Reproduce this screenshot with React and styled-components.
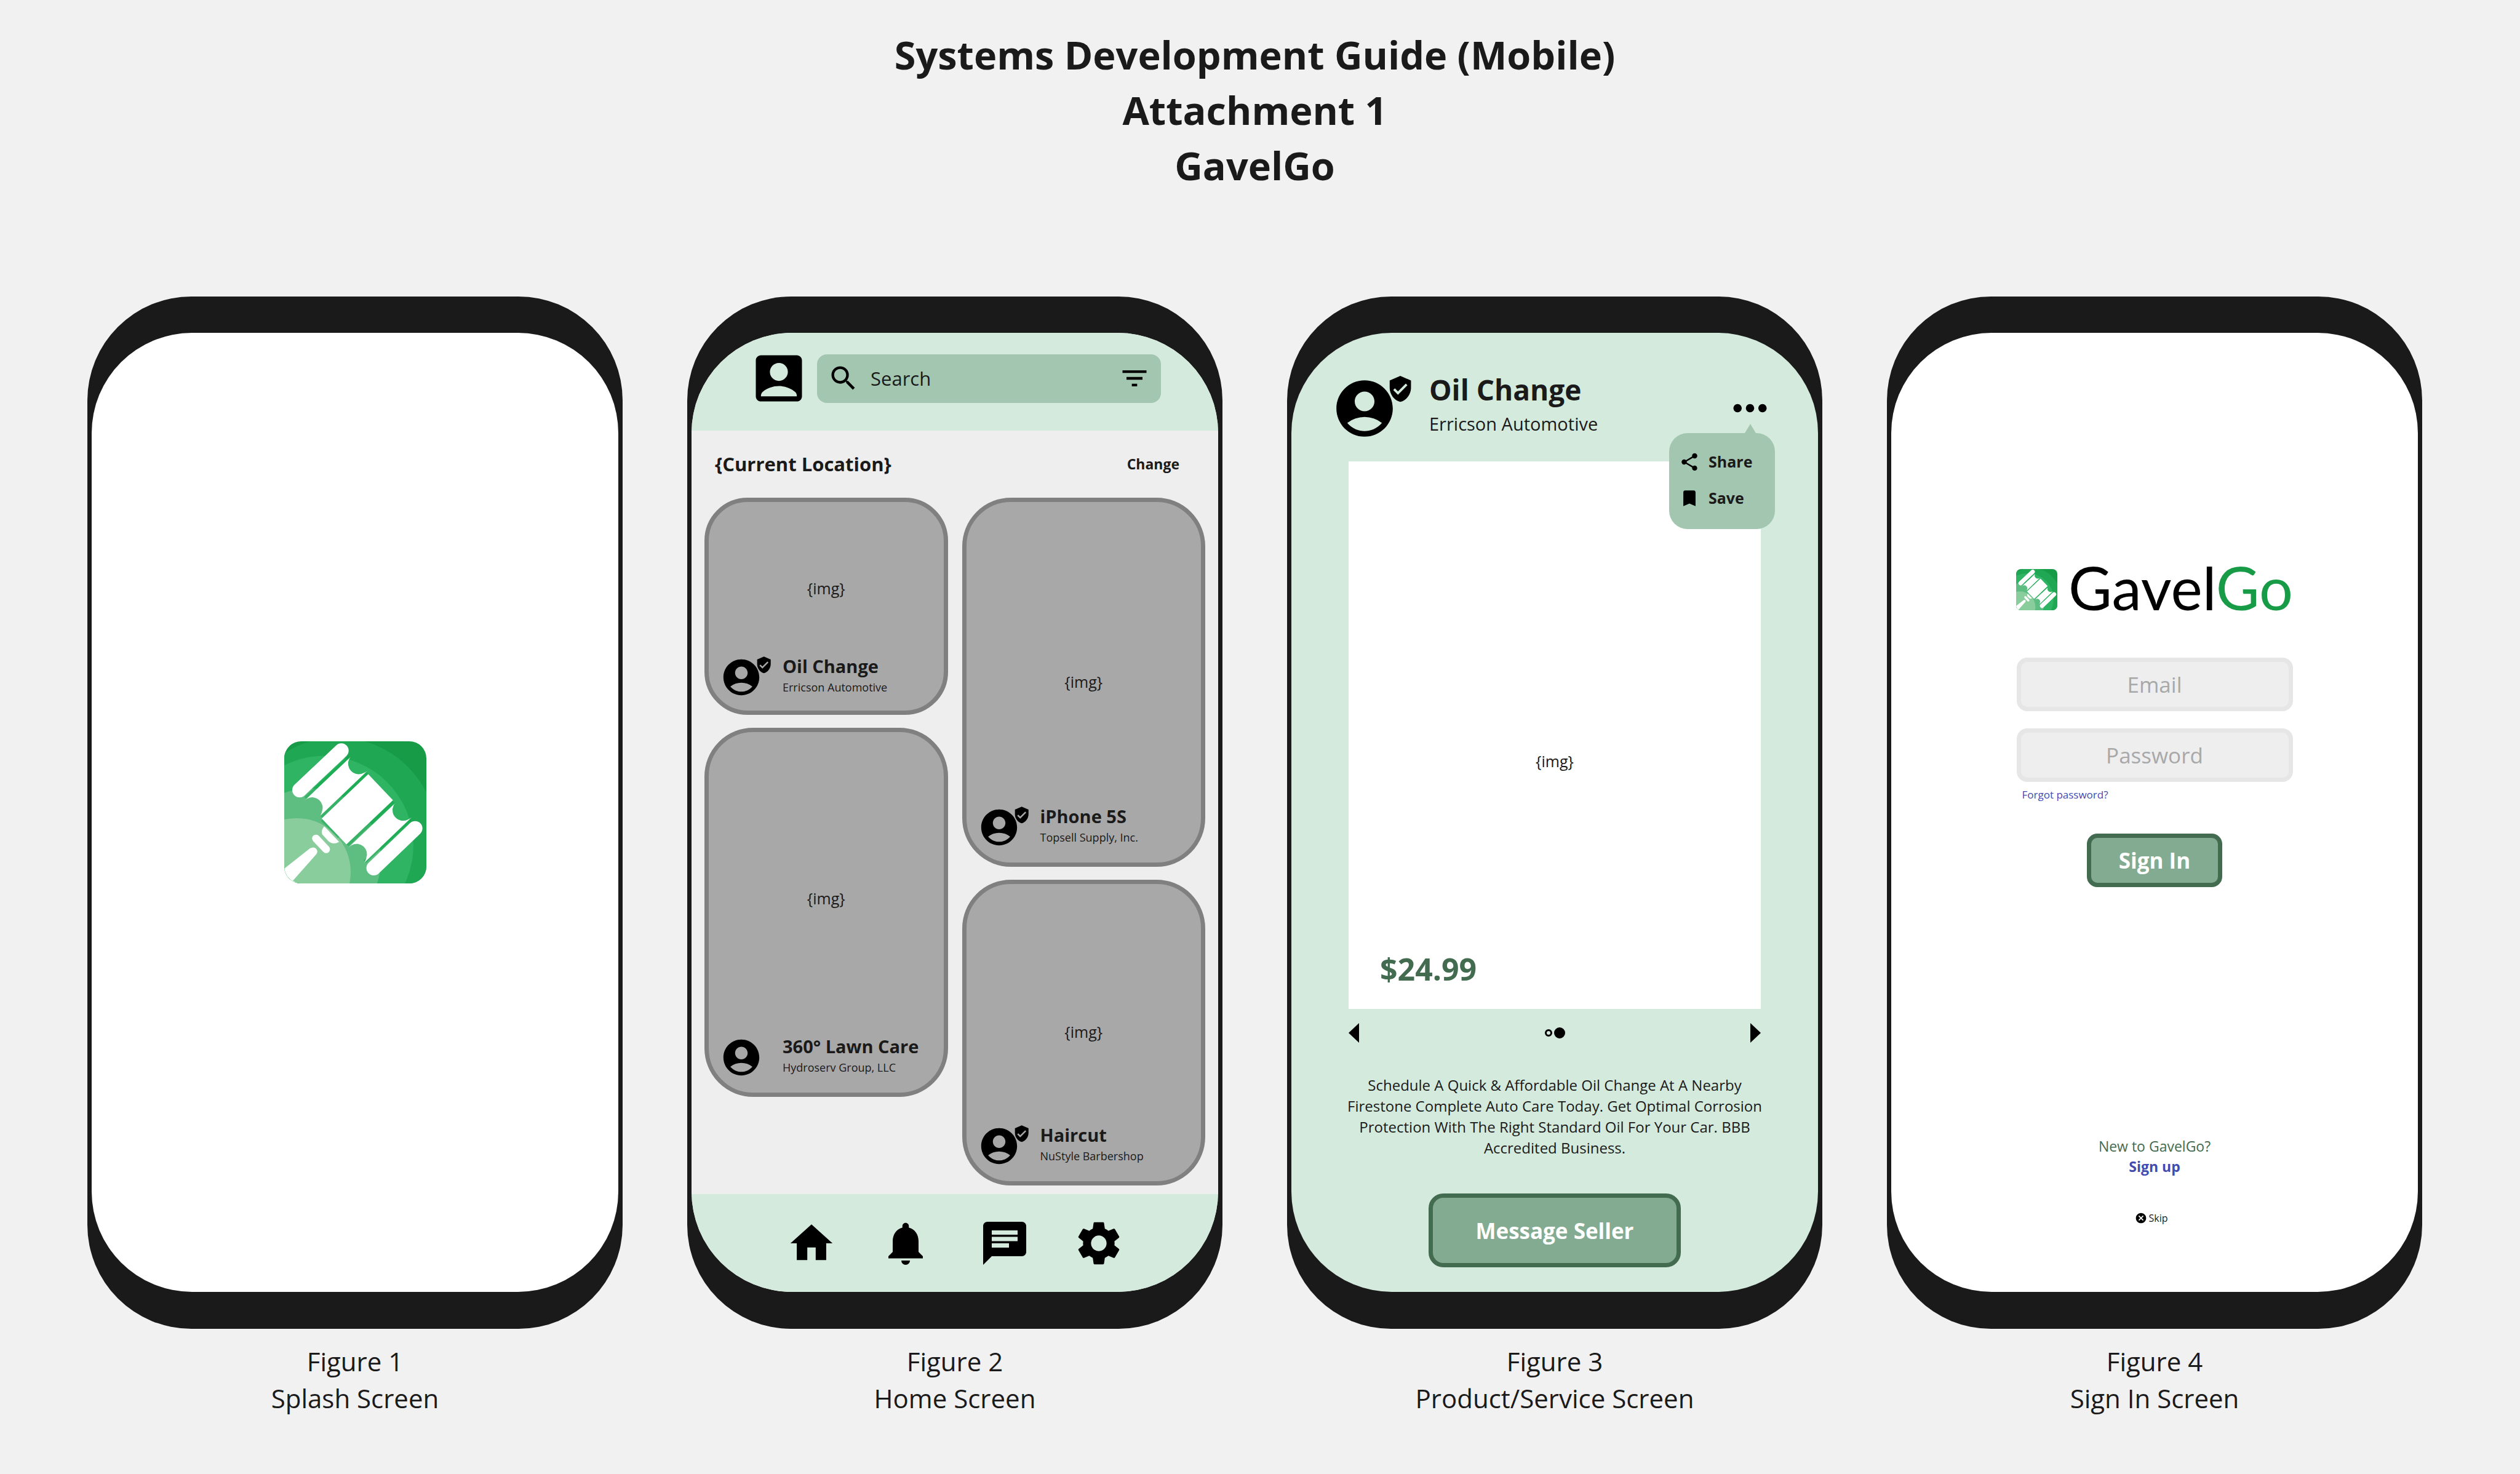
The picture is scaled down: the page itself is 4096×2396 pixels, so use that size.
import React from "react";
import styled, { createGlobalStyle } from "styled-components";
import {
  MdAccountBox,
  MdAccountCircle,
  MdBookmark,
  MdCancel,
  MdChat,
  MdFilterList,
  MdHome,
  MdMoreHoriz,
  MdNotifications,
  MdSearch,
  MdShare,
  MdVerifiedUser,
} from "react-icons/md";

const color = {
  ink: "#1a1a1a",
  page: "#f1f1f1",
  panel: "#eeeeee",
  mint: "#d4eadd",
  sage: "#a3c6b1",
  leaf: "#83ab92",
  forest: "#436b50",
  link: "#414bb2",
  brand: "#179b47",
  muted: "#a8a8a8",
};

const GlobalStyle = createGlobalStyle`
  *, *::before, *::after { box-sizing: border-box; }
  body {
    margin: 0;
    background: ${color.page};
    color: ${color.ink};
    font-family: "Open Sans", "Noto Sans", sans-serif;
  }
  h1, h2, p, figure { margin: 0; }
  button, input { font: inherit; color: inherit; }
  button { padding: 0; border: 0; background: none; cursor: pointer; }
  a { text-decoration: none; }
  svg { display: block; flex: none; }
`;

/* ---------- page ---------- */

const Page = styled.main`
  min-height: 100vh;
  padding: 44px 159px 44px 142px;
`;

const PageTitle = styled.h1`
  font-size: 63px;
  line-height: 90px;
  font-weight: 700;
  text-align: center;
`;

const TitleLine = styled.span`
  display: block;
`;

const Gallery = styled.div`
  display: grid;
  grid-template-columns: repeat(4, minmax(0, 1fr));
  gap: 105px;
  margin-top: 168px;
`;

const Figure = styled.figure`
  display: flex;
  flex-direction: column;
  gap: 23px;
`;

const Caption = styled.figcaption`
  font-size: 42px;
  line-height: 60px;
  text-align: center;
`;

const Device = styled.div`
  padding: 59px 7px 60px;
  border-radius: 169px;
  background: ${color.ink};
`;

const Screen = styled.div`
  display: flex;
  flex-direction: column;
  aspect-ratio: 856 / 1559;
  border-radius: 163px;
  overflow: hidden;
  background: ${(p) => p.$fill || "#ffffff"};
`;

function Phone({ number, name, fill, children }) {
  return (
    <Figure>
      <Device>
        <Screen $fill={fill}>{children}</Screen>
      </Device>
      <Caption>
        Figure {number}
        <br />
        {name}
      </Caption>
    </Figure>
  );
}

/* ---------- shared drawings ---------- */

function GavelLogo({ size, id }) {
  const segment =
    "M553 234Q546 241 543 249A62 62 0 0 0 628 330Q638 327 648 319L372 583Q380 572 383 557A61 61 0 0 0 298 480Q288 485 279 494Z";
  return (
    <svg width={size} height={size} viewBox="162 144 834 834" role="img" aria-label="GavelGo logo">
      <clipPath id={id}>
        <rect x="162" y="144" width="834" height="834" rx="100" />
      </clipPath>
      <g clipPath={`url(#${id})`}>
        <rect x="162" y="144" width="834" height="834" fill="#179b47" />
        <circle cx="475" cy="705" r="583" fill="#20a754" />
        <circle cx="395" cy="755" r="525" fill="#2eb463" />
        <circle cx="310" cy="840" r="420" fill="#5ebe82" />
        <circle cx="235" cy="912" r="317" fill="#8acd9d" />
        <g stroke="#0aa545" strokeWidth="20" opacity="0.45">
          <path d="M287 478L545 236M378 586L648 328M532 753L803 499M635 850L903 604M385 604L484 706" fill="none" />
        </g>
        <g fill="#ffffff">
          <path d="M655 337L800 490L527 749L382 597Z" />
          <path d={segment} />
          <path d={segment} transform="translate(260 273)" />
          <path d="M397 643Q376 666 385 690L421 730Q448 754 484 734Z" />
          <path d="M162 891L313 772Q334 760 349 774Q362 790 351 806L213 962L240 978H162Z" />
        </g>
        <g stroke="#ffffff" strokeLinecap="round">
          <path d="M252 430L497 199M687 888L930 655" strokeWidth="86" />
          <path d="M348 714L408 778" strokeWidth="45" />
        </g>
      </g>
    </svg>
  );
}

function GearIcon({ size }) {
  return (
    <svg width={size} height={size} viewBox="0 0 24 24" fill="currentColor" aria-hidden="true">
      <path d="M19.43 12.98c.04-.32.07-.64.07-.98s-.03-.66-.07-.98l2.11-1.65c.19-.15.24-.42.12-.64l-2-3.46c-.12-.22-.39-.3-.61-.22l-2.49 1c-.52-.4-1.08-.73-1.69-.98l-.38-2.65C14.46 2.18 14.25 2 14 2h-4c-.25 0-.46.18-.49.42l-.38 2.65c-.61.25-1.17.59-1.69.98l-2.49-1c-.23-.09-.49 0-.61.22l-2 3.46c-.13.22-.07.49.12.64l2.11 1.65c-.04.32-.07.65-.07.98s.03.66.07.98l-2.11 1.65c-.19.15-.24.42-.12.64l2 3.46c.12.22.39.3.61.22l2.49-1c.52.4 1.08.73 1.69.98l.38 2.65c.03.24.24.42.49.42h4c.25 0 .46-.18.49-.42l.38-2.65c.61-.25 1.17-.59 1.69-.98l2.49 1c.23.09.49 0 .61-.22l2-3.46c.12-.22.07-.49-.12-.64l-2.11-1.65zM12 15.7c-2.04 0-3.7-1.66-3.7-3.7s1.66-3.7 3.7-3.7 3.7 1.66 3.7 3.7-1.66 3.7-3.7 3.7z" />
    </svg>
  );
}

const AvatarBox = styled.span`
  position: relative;
  flex: none;
  width: ${(p) => p.$size}px;
  height: ${(p) => p.$size}px;
  color: #000000;
`;

const VerifiedBadge = styled(MdVerifiedUser)`
  position: absolute;
  top: 0;
  left: 82%;
  width: 42%;
  height: 42%;
`;

function Avatar({ size, verified }) {
  return (
    <AvatarBox $size={size}>
      <MdAccountCircle size={size} />
      {verified && <VerifiedBadge />}
    </AvatarBox>
  );
}

/* ---------- splash ---------- */

const SplashBody = styled.div`
  flex: 1;
  display: grid;
  place-items: center;
`;

/* ---------- home ---------- */

const HomeHeader = styled.header`
  display: flex;
  align-items: center;
  gap: 12px;
  padding: 24px 93px 35px 92px;
  background: ${color.mint};
`;

const IconButton = styled.button`
  display: grid;
  place-items: center;
  color: #000000;
`;

const SearchBar = styled.form`
  flex: 1;
  min-width: 0;
  display: flex;
  align-items: center;
  gap: 18px;
  height: 79px;
  padding: 0 17px;
  border-radius: 16px;
  background: ${color.sage};
`;

const SearchIcon = styled(MdSearch)`
  color: #000000;
`;

const SearchInput = styled.input`
  flex: 1;
  min-width: 0;
  padding: 0;
  border: 0;
  outline: 0;
  background: transparent;
  font-size: 31px;
  line-height: 44px;
  &::placeholder { color: ${color.ink}; opacity: 1; }
`;

const HomeBody = styled.div`
  flex: 1;
  padding: 0 21px;
  background: ${color.panel};
`;

const LocationRow = styled.div`
  display: flex;
  align-items: center;
  justify-content: space-between;
  padding: 33px 42px 34px 17px;
  line-height: 42px;
  font-weight: 700;
`;

const Location = styled.h2`
  font-size: 31px;
`;

const ChangeButton = styled.button`
  font-size: 23px;
  font-weight: 700;
`;

const Columns = styled.div`
  display: grid;
  grid-template-columns: repeat(2, minmax(0, 1fr));
  align-items: start;
  gap: 23px;
`;

const Column = styled.div`
  display: grid;
  gap: 21px;
`;

const Card = styled.article`
  display: grid;
  height: ${(p) => p.$height}px;
  padding: 0 18px ${(p) => (p.$compact ? 19 : 22)}px;
  border: 7px solid #808080;
  border-radius: ${(p) => (p.$compact ? 70 : 79)}px;
  background: ${color.muted};
`;

const ImageSlot = styled.span`
  grid-area: 1 / 1;
  place-self: center;
  padding-top: ${(p) => p.$drop || 0}px;
  padding-bottom: ${(p) => p.$lift || 0}px;
  font-size: 25px;
  line-height: 35px;
`;

const CardFooter = styled.div`
  grid-area: 1 / 1;
  align-self: end;
  display: flex;
  align-items: center;
  gap: 32px;
`;

const CardTitle = styled.h2`
  font-size: 29px;
  line-height: 33px;
  font-weight: 700;
`;

const CardSeller = styled.p`
  font-size: 18px;
  line-height: 37px;
`;

function ListingCard({ title, seller, height, compact, lift, drop, verified }) {
  return (
    <Card $height={height} $compact={compact}>
      <ImageSlot $lift={lift} $drop={drop}>
        {"{img}"}
      </ImageSlot>
      <CardFooter>
        <Avatar size={70} verified={verified} />
        <div>
          <CardTitle>{title}</CardTitle>
          <CardSeller>{seller}</CardSeller>
        </div>
      </CardFooter>
    </Card>
  );
}

const TabBar = styled.nav`
  display: flex;
  align-items: center;
  justify-content: center;
  gap: 77px;
  height: 159px;
  background: ${color.mint};
`;

const TabPair = styled.div`
  display: grid;
  grid-template-columns: 84px 84px;
  gap: 69px;
`;

/* ---------- product ---------- */

const ProductHeader = styled.header`
  display: flex;
  align-items: center;
  gap: 50px;
  padding: 67px 70px 31px 64px;
`;

const ProductHeading = styled.div`
  flex: 1;
`;

const ProductTitle = styled.h2`
  font-size: 46px;
  line-height: 50px;
  font-weight: 700;
`;

const ProductSeller = styled.p`
  font-size: 29px;
  line-height: 61px;
`;

const MenuAnchor = styled.div`
  position: relative;
`;

const Menu = styled.div`
  position: absolute;
  top: 100%;
  right: 0;
  width: 172px;
  padding: 17px 16px 21px;
  border-radius: 30px;
  background: ${color.sage};
  &::before {
    content: "";
    position: absolute;
    bottom: 100%;
    right: 31px;
    border: 9px solid transparent;
    border-top: 0;
    border-bottom: 15px solid ${color.sage};
  }
`;

const MenuItem = styled.button`
  display: flex;
  align-items: center;
  gap: 14px;
  width: 100%;
  height: 59px;
  font-size: 25px;
  line-height: 35px;
  font-weight: 700;
  svg { color: #000000; }
`;

const ProductImage = styled.div`
  display: grid;
  height: 890px;
  margin: 0 93px;
  background: #ffffff;
`;

const Price = styled.p`
  grid-area: 1 / 1;
  place-self: end start;
  padding: 0 51px 30px;
  font-size: 50px;
  line-height: 70px;
  font-weight: 700;
  color: ${color.forest};
`;

const Pager = styled.div`
  display: flex;
  align-items: center;
  justify-content: space-between;
  margin: 23px 93px 52px;
`;

const PageDots = styled.div`
  display: flex;
  align-items: center;
  gap: 3px;
`;

const PageDot = styled.span`
  width: ${(p) => (p.$active ? 18 : 12)}px;
  aspect-ratio: 1;
  border: 3px solid #000000;
  border-radius: 50%;
  background: ${(p) => (p.$active ? "#000000" : "transparent")};
`;

const Description = styled.p`
  padding: 0 83px;
  font-size: 24px;
  line-height: 34px;
  text-align: center;
`;

const ActionButton = styled.button`
  align-self: center;
  width: ${(p) => (p.$large ? 410 : 220)}px;
  height: ${(p) => (p.$large ? 120 : 87)}px;
  margin-top: ${(p) => (p.$large ? 57 : 51)}px;
  border: 7px solid ${color.forest};
  border-radius: ${(p) => (p.$large ? 24 : 17)}px;
  background: ${color.leaf};
  color: #ffffff;
  font-size: 35px;
  font-weight: 700;
`;

/* ---------- sign in ---------- */

const SignInBody = styled.div`
  flex: 1;
  display: flex;
  flex-direction: column;
  align-items: center;
  padding: 380px 0 108px;
`;

const Brand = styled.div`
  display: flex;
  align-items: baseline;
  gap: 18px;
`;

const Wordmark = styled.span`
  font-family: Lato, "Open Sans", sans-serif;
  font-size: 97px;
  line-height: 67px;
  color: #000000;
`;

const WordmarkAccent = styled.span`
  color: ${color.brand};
`;

const SignInForm = styled.form`
  display: flex;
  flex-direction: column;
  width: 449px;
  margin-top: 77px;
`;

const Fields = styled.div`
  display: grid;
  gap: 28px;
`;

const TextField = styled.input`
  width: 100%;
  height: 87px;
  padding: 0 20px;
  border: 7px solid #e6e6e6;
  border-radius: 17px;
  outline: 0;
  background: ${color.panel};
  font-size: 35px;
  text-align: center;
  &::placeholder { color: ${color.muted}; opacity: 1; }
`;

const ForgotLink = styled.a`
  align-self: flex-start;
  margin: 9px 9px 0;
  font-size: 17px;
  line-height: 24px;
  color: ${color.link};
`;

const SignUpPrompt = styled.p`
  margin-top: auto;
  font-size: 23px;
  line-height: 33px;
  text-align: center;
  color: ${color.forest};
`;

const SignUpLink = styled.a`
  display: block;
  font-weight: 700;
  color: ${color.link};
`;

const SkipButton = styled.button`
  display: flex;
  align-items: center;
  gap: 2px;
  margin-top: 55px;
  padding-right: 10px;
  font-size: 16px;
  line-height: 24px;
  svg { color: #000000; }
`;

/* ---------- screens ---------- */

function HomeScreen() {
  return (
    <>
      <HomeHeader>
        <IconButton type="button" aria-label="Account">
          <MdAccountBox size={100} />
        </IconButton>
        <SearchBar role="search">
          <SearchIcon size={52} />
          <SearchInput type="text" aria-label="Search" placeholder="Search" />
          <IconButton type="button" aria-label="Filter">
            <MdFilterList size={52} />
          </IconButton>
        </SearchBar>
      </HomeHeader>
      <HomeBody>
        <LocationRow>
          <Location>{"{Current Location}"}</Location>
          <ChangeButton type="button">Change</ChangeButton>
        </LocationRow>
        <Columns>
          <Column>
            <ListingCard title="Oil Change" seller="Erricson Automotive" height={353} lift={40} compact verified />
            <ListingCard title="360° Lawn Care" seller="Hydroserv Group, LLC" height={600} lift={24} />
          </Column>
          <Column>
            <ListingCard title="iPhone 5S" seller="Topsell Supply, Inc." height={600} drop={20} verified />
            <ListingCard title="Haircut" seller="NuStyle Barbershop" height={497} drop={20} verified />
          </Column>
        </Columns>
      </HomeBody>
      <TabBar>
        <TabPair>
          <IconButton type="button" aria-label="Home">
            <MdHome size={82} />
          </IconButton>
          <IconButton type="button" aria-label="Notifications">
            <MdNotifications size={84} />
          </IconButton>
        </TabPair>
        <TabPair>
          <IconButton type="button" aria-label="Messages">
            <MdChat size={84} />
          </IconButton>
          <IconButton type="button" aria-label="Settings">
            <GearIcon size={82} />
          </IconButton>
        </TabPair>
      </TabBar>
    </>
  );
}

function ProductScreen() {
  return (
    <>
      <ProductHeader>
        <Avatar size={110} verified />
        <ProductHeading>
          <ProductTitle>Oil Change</ProductTitle>
          <ProductSeller>Erricson Automotive</ProductSeller>
        </ProductHeading>
        <MenuAnchor>
          <IconButton type="button" aria-label="More options" aria-expanded="true">
            <MdMoreHoriz size={81} />
          </IconButton>
          <Menu>
            <MenuItem type="button">
              <MdShare size={34} />
              Share
            </MenuItem>
            <MenuItem type="button">
              <MdBookmark size={34} />
              Save
            </MenuItem>
          </Menu>
        </MenuAnchor>
      </ProductHeader>
      <ProductImage>
        <ImageSlot $drop={84}>{"{img}"}</ImageSlot>
        <Price>$24.99</Price>
      </ProductImage>
      <Pager>
        <IconButton type="button" aria-label="Previous image">
          <svg width="17" height="32" viewBox="0 0 17 32">
            <path d="M17 0L0 16L17 32Z" />
          </svg>
        </IconButton>
        <PageDots>
          <PageDot />
          <PageDot $active />
        </PageDots>
        <IconButton type="button" aria-label="Next image">
          <svg width="17" height="32" viewBox="0 0 17 32">
            <path d="M0 0L17 16L0 32Z" />
          </svg>
        </IconButton>
      </Pager>
      <Description>
        Schedule A Quick &amp; Affordable Oil Change At A Nearby Firestone Complete Auto Care Today. Get Optimal
        Corrosion Protection With The Right Standard Oil For Your Car. BBB Accredited Business.
      </Description>
      <ActionButton type="button" $large>
        Message Seller
      </ActionButton>
    </>
  );
}

function SignInScreen() {
  return (
    <SignInBody>
      <Brand>
        <GavelLogo size={67} id="logo-clip-small" />
        <Wordmark>
          Gavel<WordmarkAccent>Go</WordmarkAccent>
        </Wordmark>
      </Brand>
      <SignInForm>
        <Fields>
          <TextField type="email" aria-label="Email" placeholder="Email" />
          <TextField type="password" aria-label="Password" placeholder="Password" />
        </Fields>
        <ForgotLink href="#forgot">Forgot password?</ForgotLink>
        <ActionButton type="button">Sign In</ActionButton>
      </SignInForm>
      <SignUpPrompt>
        New to GavelGo?
        <SignUpLink href="#sign-up">Sign up</SignUpLink>
      </SignUpPrompt>
      <SkipButton type="button">
        <MdCancel size={20} />
        Skip
      </SkipButton>
    </SignInBody>
  );
}

export default function App() {
  return (
    <>
      <GlobalStyle />
      <Page>
        <PageTitle>
          <TitleLine>Systems Development Guide (Mobile)</TitleLine>
          <TitleLine>Attachment 1</TitleLine>
          <TitleLine>GavelGo</TitleLine>
        </PageTitle>
        <Gallery>
          <Phone number={1} name="Splash Screen">
            <SplashBody>
              <GavelLogo size={231} id="logo-clip-large" />
            </SplashBody>
          </Phone>
          <Phone number={2} name="Home Screen" fill={color.panel}>
            <HomeScreen />
          </Phone>
          <Phone number={3} name="Product/Service Screen" fill={color.mint}>
            <ProductScreen />
          </Phone>
          <Phone number={4} name="Sign In Screen">
            <SignInScreen />
          </Phone>
        </Gallery>
      </Page>
    </>
  );
}
